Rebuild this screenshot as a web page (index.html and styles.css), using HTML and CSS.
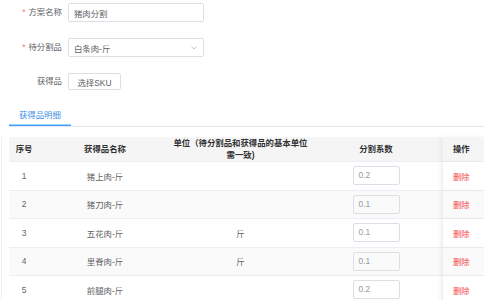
FILE: index.html
```html
<!DOCTYPE html>
<html lang="zh-CN">
<head>
<meta charset="utf-8">
<link rel="stylesheet" href="styles.css">
</head>
<body>
<div class="page">
  <div class="form">
    <div class="form-row">
      <label class="form-label"><span class="req">*</span>方案名称</label>
      <div class="input"><span class="input-text">猪肉分割</span></div>
    </div>
    <div class="form-row">
      <label class="form-label"><span class="req">*</span>待分割品</label>
      <div class="input select"><span class="input-text">白条肉-斤</span>
        <svg class="chevron" width="6" height="4" viewBox="0 0 6 4"><path d="M0.5 0.6 L3 3.1 L5.5 0.6" fill="none" stroke="#b4b7bd" stroke-width="0.8"/></svg>
      </div>
    </div>
    <div class="form-row short">
      <label class="form-label">获得品</label>
      <button class="btn">选择SKU</button>
    </div>
  </div>

  <div class="tabs">
    <div class="tab active">获得品明细</div>
  </div>

  <div class="table-wrap">
    <table class="table">
      <colgroup>
        <col class="c1"><col class="c2"><col class="c3"><col class="c4"><col class="c5">
      </colgroup>
      <thead>
        <tr>
          <th>序号</th>
          <th>获得品名称</th>
          <th>单位（待分割品和获得品的基本单位<br>需一致)</th>
          <th>分割系数</th>
          <th class="op">操作</th>
        </tr>
      </thead>
      <tbody>
        <tr>
          <td>1</td><td>猪上肉-斤</td><td></td>
          <td><div class="num">0.2</div></td>
          <td class="op"><span class="del">删除</span></td>
        </tr>
        <tr class="stripe">
          <td>2</td><td>猪刀肉-斤</td><td></td>
          <td><div class="num">0.1</div></td>
          <td class="op"><span class="del">删除</span></td>
        </tr>
        <tr>
          <td>3</td><td>五花肉-斤</td><td>斤</td>
          <td><div class="num">0.1</div></td>
          <td class="op"><span class="del">删除</span></td>
        </tr>
        <tr class="stripe">
          <td>4</td><td>里脊肉-斤</td><td>斤</td>
          <td><div class="num">0.1</div></td>
          <td class="op"><span class="del">删除</span></td>
        </tr>
        <tr>
          <td>5</td><td>前腿肉-斤</td><td></td>
          <td><div class="num">0.2</div></td>
          <td class="op"><span class="del">删除</span></td>
        </tr>
      </tbody>
    </table>
  </div>
</div>
</body>
</html>
```

FILE: styles.css
```css
* { box-sizing: border-box; }
html, body { margin: 0; padding: 0; background: #fff; }
body {
  font-family: "Liberation Sans", "Noto Sans CJK SC", sans-serif;
  font-size: 8.4px;
  color: #606266;
  overflow: hidden;
}
.page { width: 484px; height: 300px; overflow: hidden; }

.form { padding-top: 3px; }
.form-row {
  display: flex;
  align-items: center;
  height: 19px;
  margin-bottom: 16px;
}
.form-row.short { height: 17px; margin-bottom: 0; }
.form-label {
  width: 68px;
  padding-right: 6px;
  text-align: right;
  color: #606266;
  line-height: 1;
}
.req { color: #f56c6c; margin-right: 3px; }

.input {
  width: 136px;
  height: 19px;
  border: 1px solid #dcdfe6;
  border-radius: 2px;
  display: flex;
  align-items: center;
  padding: 0 5px;
  color: #606266;
}
.input-text { flex: 1; }
.chevron { margin-right: 1px; }

.btn {
  height: 17px;
  width: 53px;
  padding: 0;
  border: 1px solid #dcdfe6;
  border-radius: 2px;
  background: #fff;
  font: inherit;
  color: #606266;
}

.tabs {
  margin: 15px 0 0 9px;
  display: flex;
  border-bottom: 1px solid #e4e7ed;
}
.tab {
  height: 21px;
  line-height: 21px;
  padding: 0 10px;
  color: #3a8ee6;
}
.tab.active { box-shadow: inset 0 -1.5px 0 #409eff; }

.table-wrap {
  margin-top: 10px;
  margin-left: 1px;
  border-left: 1px solid #f0f0f0;
  padding-left: 7px;
}
.table {
  border-collapse: separate;
  border-spacing: 0;
  table-layout: fixed;
  width: 475px;
}
.c1 { width: 30px; }
.c2 { width: 132px; }
.c3 { width: 139px; }
.c4 { width: 132px; }
.c5 { width: 42px; }

.table th {
  height: 24px;
  background: #f5f5f5;
  color: #303133;
  font-weight: 600;
  text-align: center;
  line-height: 12px;
  padding: 0;
  border-bottom: 1px solid #ebeef5;
}
.table td {
  height: 28.5px;
  text-align: center;
  padding: 0;
  color: #606266;
  border-bottom: 1px solid #ebeef5;
}
.table tr.stripe td { background: #fafafa; }
.table .op {
  text-align: left;
  padding-left: 10px;
  border-left: 1px solid #ebeef5;
  box-shadow: -2px 0 4px rgba(0, 0, 0, 0.05);
}
.table td.op { background: #fff; }
.table tr.stripe td.op { background: #fafafa; }

.num {
  width: 47px;
  height: 19px;
  margin: 0 auto;
  border: 1px solid #dcdfe6;
  border-radius: 2px;
  text-align: left;
  padding-left: 5px;
  line-height: 17px;
  color: #999;
}
.del { color: #f5484a; }
```
